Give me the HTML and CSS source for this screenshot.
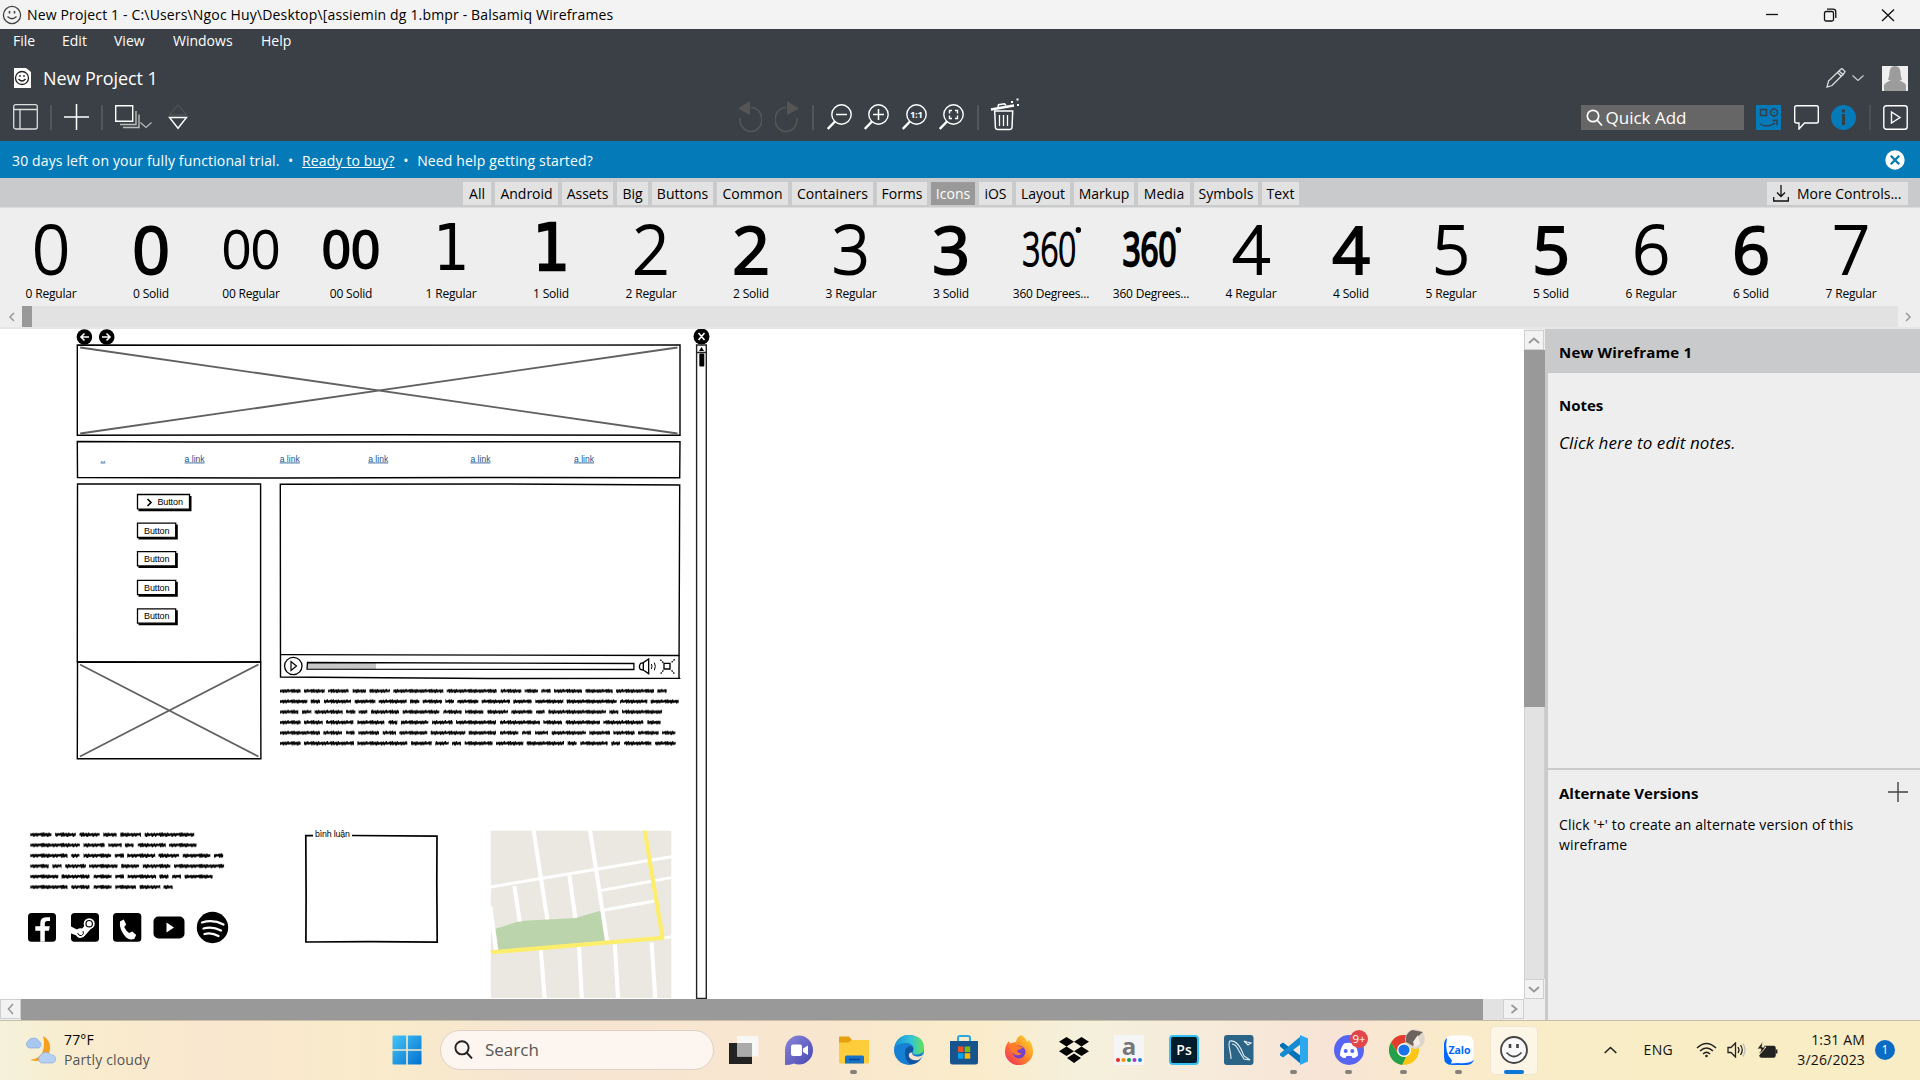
FILE: index.html
```html
<!DOCTYPE html>
<html lang="en">
<head>
<meta charset="utf-8">
<title>New Project 1 - Balsamiq Wireframes</title>
<link rel="stylesheet" href="styles.css">
</head>
<body>
<div class="desktop">
  <header class="titlebar">
    <svg class="title-icon" width="20" height="20" viewBox="0 0 20 20" fill="none" stroke="#444" stroke-width="1.300"><circle cx="10" cy="10" r="8.600"/><path d="M5.500 11.500q4.500 4.500 9 0" /><path d="M7.500 6v2.500M12.500 6v2.500" stroke-width="1.600"/></svg>
    <span class="window-title">New Project 1 - C:\Users\Ngoc Huy\Desktop\[assiemin dg 1.bmpr - Balsamiq Wireframes</span>
    <div class="window-controls">
      <svg width="14" height="14" viewBox="0 0 14 14"><path d="M1 6.500h12" stroke="#111" stroke-width="1.300"/></svg>
      <svg width="14" height="14" viewBox="0 0 14 14" fill="none" stroke="#111" stroke-width="1.300"><rect x="1.500" y="3.500" width="9" height="9.500" rx="1.500"/><path d="M4 1.200h6a2.800 2.800 0 0 1 2.800 2.800v6"/></svg>
      <svg width="14" height="14" viewBox="0 0 14 14"><path d="M1 1.500 13 13M13 1.500 1 13" stroke="#111" stroke-width="1.300"/></svg>
    </div>
  </header>

  <div class="app-head">
    <nav class="menu"><span class="m-file">File</span><span class="m-edit">Edit</span><span class="m-view">View</span><span class="m-windows">Windows</span><span>Help</span></nav>
    <div class="project-row">
      <svg width="18" height="20" viewBox="0 0 18 20"><path d="M1 0h12l5 4v16H1z" fill="#fff"/><g fill="none" stroke="#222" stroke-width="1.300"><circle cx="9" cy="10" r="6.500"/><path d="M5.500 11q3.500 4 7 0M7 7v2M11 7v2"/></g></svg>
      <span class="project-name">New Project 1</span>
      <div class="account">
        <svg width="20" height="20" viewBox="0 0 20 20" fill="none" stroke="#ddd" stroke-width="1.300"><path d="m1 19 1.500-6L14 2l2-1.500 3 3L17.500 6 6 17.500z"/><path d="m13 3 4.500 4M11.500 4.500l4 4"/></svg>
        <svg class="chev" width="12" height="6" viewBox="0 0 12 6" fill="none" stroke="#ccc" stroke-width="1.200"><path d="m.5.500 5.500 5 5.500-5"/></svg>
        <svg width="26" height="25" viewBox="0 0 26 25"><path d="M0 0h26v25H0z" fill="#efefef"/><path d="M2 25v-6q1-2.500 7-4.500-2.500 0-3-1 1.500-3 1.500-7.500Q8 0 13 0t5.500 6q0 4.500 1.500 7.500-.5 1-3 1 6 2 7 4.500v6z" fill="#9c9c9c"/></svg>
      </div>
    </div>
    <div class="toolbar">
      <div class="tools tools-left">
        <svg width="25" height="26" viewBox="0 0 25 26" fill="none" stroke="#ddd" stroke-width="1.300"><rect x=".7" y=".7" width="23.600" height="24.300" rx="2"/><path d="M1 5.500h23M7 5.500V25"/></svg>
        <i class="sep"></i>
        <svg width="25" height="26" viewBox="0 0 25 26" stroke="#fff" stroke-width="1.500"><path d="M12.500 0v26M0 13h25"/></svg>
        <i class="sep"></i>
        <svg width="37" height="26" viewBox="0 0 37 26" fill="none" stroke="#fff" stroke-width="1.400"><path d="M.7 1.700h17v15.500H.7z"/><path d="M21 7v13.500H5M24 10.500v13H8" stroke="#bbb"/><path d="m25.500 18.500 5.500 5 5.500-5" stroke="#bbb" stroke-width="1.100"/></svg>
        <svg class="order" width="20" height="26" viewBox="0 0 20 26" fill="none"><path d="M1.500 11 10 .8 18.500 11z" stroke="#59595b"/><path d="M1.500 13.500h17L10 24.300z" stroke="#fff" stroke-width="1.400"/></svg>
      </div>
      <div class="tools tools-center">
        <svg width="25" height="32" viewBox="0 0 25 32"><path d="M14 6.500A11 12 0 1 1 3 17" fill="none" stroke="#555554" stroke-width="1.700"/><path d="M13 0v14L1 7.500z" fill="#555554"/></svg>
        <svg width="25" height="32" viewBox="0 0 25 32"><path d="M11 6.500A11 12 0 1 0 22 17" fill="none" stroke="#555554" stroke-width="1.700"/><path d="M12 0v14l12-6.500z" fill="#555554"/></svg>
        <i class="sep"></i>
        <svg width="25" height="26" viewBox="0 0 25 26" fill="none" stroke="#fff"><circle cx="14.500" cy="10.500" r="9.700" stroke-width="1.400"/><path d="M8 17.500.8 25" stroke-width="2.400"/><path d="M9 10.500h11" stroke-width="1.500"/></svg>
        <svg width="25" height="26" viewBox="0 0 25 26" fill="none" stroke="#fff"><circle cx="14.500" cy="10.500" r="9.700" stroke-width="1.400"/><path d="M8 17.500.8 25" stroke-width="2.400"/><path d="M9 10.500h11M14.500 5v11" stroke-width="1.500"/></svg>
        <svg width="25" height="26" viewBox="0 0 25 26" fill="none" stroke="#fff"><circle cx="14.500" cy="10.500" r="9.700" stroke-width="1.400"/><path d="M8 17.500.8 25" stroke-width="2.400"/><text class="ratio" x="14.300" y="14.300" text-anchor="middle">1:1</text></svg>
        <svg width="25" height="26" viewBox="0 0 25 26" fill="none" stroke="#fff"><circle cx="14.500" cy="10.500" r="9.700" stroke-width="1.400"/><path d="M8 17.500.8 25" stroke-width="2.400"/><path d="M13 6.500h-2.500v3M16 6.500h2.500v3M13 14.500h-2.500v-3M16 14.500h2.500v-3" stroke-width="1.400"/></svg>
        <i class="sep"></i>
        <svg class="trash" width="30" height="33" viewBox="0 0 30 33" fill="none" stroke="#fff"><path d="M1 11.500 24 7.500" stroke-width="2.600"/><path d="m8 9 .5-2.300 6-1L16 7.500" stroke-width="1.500"/><path d="M4.700 13h18l-.7 16.500q-.3 2-2.300 2h-12q-2 0-2.300-2z" stroke-width="1.500"/><path d="M9.500 17v11M13.500 17v11M17.500 17v11" stroke-width="1.300"/><path d="M21 4h2M26.500 1.500h2M27 7h2" stroke-width="2"/></svg>
      </div>
      <div class="tools tools-right">
        <div class="quick-add"><svg width="17" height="17" viewBox="0 0 17 17" fill="none" stroke="#fff" stroke-width="1.700"><circle cx="7" cy="7" r="5.700"/><path d="m11 11 5 5.500"/></svg><span>Quick Add</span></div>
        <svg width="25" height="25" viewBox="0 0 25 25"><path d="M0 0h25v25H0z" fill="#057ab9"/><g fill="none" stroke="#333e48" stroke-width="1.400"><path d="M4.500 4.500h6v6h-6zM4 19q7 4.500 15-1M16.500 15.500l4.500-.3v5"/><circle cx="18" cy="7.500" r="3.500"/><path d="M17.300 7.500h1.400"/></g></svg>
        <svg width="25" height="25" viewBox="0 0 25 25" fill="none" stroke="#fff" stroke-width="1.400"><path d="M2.500.800h20q1.800 0 1.800 1.800v13.600q0 1.800-1.800 1.800H10.500L5 24v-6H2.500Q.7 18 .7 16.200V2.600Q.7.800 2.500.800z"/></svg>
        <svg width="25" height="25" viewBox="0 0 25 25"><circle cx="12.500" cy="12.500" r="12.500" fill="#057ab9"/><path d="M12.500 9v11M12.500 4.500v3" stroke="#353f46" stroke-width="3"/></svg>
        <i class="sep sep-thin"></i>
        <svg width="25" height="25" viewBox="0 0 25 25" fill="none" stroke="#fff" stroke-width="1.400"><rect x=".8" y=".8" width="23.400" height="23.400" rx="2.500"/><path d="M8.500 7v11l8.500-5.500z"/></svg>
      </div>
    </div>
  </div>

  <div class="trial">
    <span>30 days left on your fully functional trial.</span><span class="dot">•</span><a>Ready to buy?</a><span class="dot">•</span><span>Need help getting started?</span>
    <svg class="trial-close" width="20" height="20" viewBox="0 0 20 20"><circle cx="10" cy="10" r="9.700" fill="#fff"/><path d="m5.800 5.800 8.400 8.400m0-8.400-8.400 8.400" stroke="#057ab9" stroke-width="2.300"/></svg>
  </div>

  <div class="categories">
    <div class="tabs">
      <span>All</span><span>Android</span><span>Assets</span><span>Big</span><span>Buttons</span><span>Common</span><span>Containers</span><span>Forms</span><span class="active">Icons</span><span>iOS</span><span>Layout</span><span>Markup</span><span>Media</span><span>Symbols</span><span>Text</span>
    </div>
    <div class="more"><svg width="16" height="17" viewBox="0 0 16 17" fill="none" stroke="#111" stroke-width="1.300"><path d="M8 0v11.500M4 7.500l4 4 4-4M.7 12v4h14.600v-4"/></svg><span>More Controls...</span></div>
  </div>

  <div class="library">
    <div class="cell"><b class="num light">0</b><span>0 Regular</span></div>
    <div class="cell"><b class="num heavy">0</b><span>0 Solid</span></div>
    <div class="cell"><b class="num light mid">00</b><span>00 Regular</span></div>
    <div class="cell"><b class="num heavy mid">00</b><span>00 Solid</span></div>
    <div class="cell"><b class="num one">1</b><span>1 Regular</span></div>
    <div class="cell"><b class="num one one-solid">1</b><span>1 Solid</span></div>
    <div class="cell"><b class="num light">2</b><span>2 Regular</span></div>
    <div class="cell"><b class="num heavy">2</b><span>2 Solid</span></div>
    <div class="cell"><b class="num light">3</b><span>3 Regular</span></div>
    <div class="cell"><b class="num heavy">3</b><span>3 Solid</span></div>
    <div class="cell"><b class="num light small">360<i class="degree"></i></b><span>360 Degrees...</span></div>
    <div class="cell"><b class="num heavy small">360<i class="degree"></i></b><span>360 Degrees...</span></div>
    <div class="cell"><b class="num light">4</b><span>4 Regular</span></div>
    <div class="cell"><b class="num heavy">4</b><span>4 Solid</span></div>
    <div class="cell"><b class="num light">5</b><span>5 Regular</span></div>
    <div class="cell"><b class="num heavy">5</b><span>5 Solid</span></div>
    <div class="cell"><b class="num light">6</b><span>6 Regular</span></div>
    <div class="cell"><b class="num heavy">6</b><span>6 Solid</span></div>
    <div class="cell"><b class="num light">7</b><span>7 Regular</span></div>
  </div>
  <div class="library-scroll">
    <svg width="22" height="21" viewBox="0 0 22 21" fill="none" stroke="#999" stroke-width="1.500"><path d="m14 7-4 4 4 4"/></svg>
    <i class="lib-thumb"></i><i class="lib-track"></i>
    <svg width="22" height="21" viewBox="0 0 22 21" fill="none" stroke="#999" stroke-width="1.500"><path d="m8 7 4 4-4 4"/></svg>
  </div>

  <main class="workspace">
    <div class="editor">
      <svg class="canvas" width="1524" height="670" viewBox="0 329 1524 670" fill="none" stroke="#000">
        <defs>
          <pattern id="scribble" patternUnits="userSpaceOnUse" width="59" height="31.400" y="137.300"><path d="M0 15.500h59" stroke="#000" stroke-width="5.500"/><path d="M0 17l6-5 2 7 5-8 2 8 6-6 3 8 4-9 3 6 7-5 2 7 5-7 3 6 6-8 3 8" stroke="#000" stroke-width="4.500"/></pattern>
          <pattern id="scribble2" patternUnits="userSpaceOnUse" width="43" height="31.400" y="58.300"><path d="M0 15.500h43" stroke="#000" stroke-width="5.500"/><path d="M0 17l4-5 2 7 3-8 2 8 4-6 3 8 3-9 3 6 5-5 2 7 4-7 3 6 4-8" stroke="#000" stroke-width="4"/></pattern>
        </defs>
        <g stroke="none" fill="#000"><circle cx="84.400" cy="337" r="7.800"/><circle cx="106.700" cy="337" r="7.800"/><circle cx="701.500" cy="336.500" r="8"/></g>
        <path d="M89 337h-8m3.500-3.500L81 337l3.500 3.500M102 337h8m-3.500-3.500 3.500 3.500-3.500 3.500M698.500 333l6 7m0-7-6 7" stroke="#fff" stroke-width="1.600"/>
        <path d="M77.300 345 300 345.300 680 345v90.300L400 434.800 77.300 435.300z" stroke-width="1.400"/>
        <path d="m80.200 347.500 597.300 86M677.500 347.500l-597.300 86" stroke="#606060" stroke-width="1.800"/>
        <path d="M77.300 441.500 200 442l480-.4-.3 36.200-200-.3-200 .5L77.500 477.500z" stroke-width="1.400"/>
        <g class="wf-link"><text x="100.600" y="461.500">..</text><text x="184.600" y="461.500" textLength="20">a link</text><text x="279.700" y="461.500" textLength="20">a link</text><text x="368.200" y="461.500" textLength="20">a link</text><text x="470.400" y="461.500" textLength="20">a link</text><text x="574" y="461.500" textLength="20">a link</text></g>
        <path d="M77.500 483.900 260.600 484v178L77.300 661.700z" stroke-width="1.400"/>
        <path d="M77.500 662 200 662.300 260.700 662l.2 96.700-183.600.1z" stroke-width="1.400"/>
        <path d="m80 664.500 178.500 92M258.500 664.500l-178.500 92" stroke="#606060" stroke-width="1.700"/>
        <path d="M280.300 484.200 500 484l179.700 1-.7 192.500.5.800-190 .2L280.500 677z" stroke-width="1.400"/>
        <path d="M280.500 654.700 679.500 655.500" stroke-width="1.300"/>
        <g stroke="none" fill="#000"><path d="M189 496h2.500v15.300h-53V509H189z"/><path d="M175.500 524.500h2.300v15H138.500v-2.300h37zM175.500 553h2.300v15H138.500v-2.300h37zM175.500 581.700h2.300v15H138.500v-2.300h37zM175.500 610.300h2.300v15H138.500v-2.300h37z"/></g>
        <g stroke-width="1.300" fill="#fff"><path d="M137.500 494.500h52v14.700l-52-.3zM137.500 523.200h38.200v14l-38.200.3zM137.500 551.600h38.200v14l-38.200.3zM137.500 580.300h38.200v14l-38.200.3zM137.500 608.900h38.200v14l-38.200.3z"/></g>
        <path d="m147.500 499 3.500 3.500-3.500 3.500" stroke-width="1.600"/>
        <g class="wf-button"><text x="157.400" y="505" textLength="25.500">Button</text><text x="144" y="533.700" textLength="25.500">Button</text><text x="144" y="562" textLength="25.500">Button</text><text x="144" y="590.800" textLength="25.500">Button</text><text x="144" y="619" textLength="25.500">Button</text></g>
        <path d="M696.600 345h9.700v653.500h-9.700zM696.600 352.500h9.700" stroke-width="1.400" stroke="#222"/>
        <path d="M699 351h5l-2.500-4z" fill="#000" stroke="none"/><rect x="699.300" y="353.500" width="5" height="13" rx="1" fill="#000" stroke="none"/>
        <circle cx="293.300" cy="666" r="8.700" stroke-width="1.300"/><path d="M291 661.500v9l5.500-4.500z" stroke-width="1.200"/>
        <path d="M307.500 662.500H376v7H307.500z" fill="#c8c8c8" stroke="none"/><path d="M307.500 662.500 633.900 663.500v6L307 669.200z" stroke-width="1.300"/>
        <g transform="translate(270 640) scale(.33333)" stroke-width="4"><path d="m1112 70 8-2 16-11v44l-16-11-9-2q-6-9 1-18zM1120 68v22"/><path d="M1144 72q4 7 0 15M1153 68q6 11 0 23" stroke-width="3"/><path d="M1182 70h18v17h-18z"/><path d="m1171 59 9 9m34-10-10 10m-32 33 9-11m32 11-9-11" stroke-dasharray="5 3"/></g>
        <g transform="translate(270 640) scale(.33333)" stroke="url(#scribble)" stroke-width="14">
          <path d="M30 153h62m10 0h62m10 0h62m12 0h40m10 0h62m10 0h150m10 0h150m12 0h62m10 0h40m10 0h28m10 0h84m10 0h82m10 0h114m10 0h28"/>
          <path d="M30 184.400h82m10 0h28m12 0h81m11 0h62m10 0h84m10 0h28m10 0h58m10 0h26m10 0h63m10 0h85m10 0h55m11 0h84m10 0h150m10 0h82m10 0h84"/>
          <path d="M30 215.800h55m11 0h28m10 0h84m10 0h28m10 0h26m11 0h84m11 0h110m12 0h55m10 0h55m12 0h62m10 0h63m11 0h26m11 0h173m10 0h27m11 0h120"/>
          <path d="M30 247.200h62m10 0h56m10 0h82m12 0h81m12 0h27m11 0h82m11 0h62m10 0h120m12 0h120m10 0h56m11 0h103m10 0h120m12 0h40"/>
          <path d="M30 278.600h120m10 0h56m12 0h26m11 0h62m11 0h40m10 0h84m10 0h104m10 0h82m12 0h55m11 0h27m12 0h39m11 0h103m10 0h62m10 0h64m10 0h62m10 0h40"/>
          <path d="M30 310h62m10 0h150m10 0h150m11 0h62m11 0h40m10 0h27m11 0h84m10 0h82m10 0h112m11 0h27m11 0h82m11 0h26m12 0h82m11 0h62"/>
        </g>
        <g transform="translate(0 810) scale(.45918 .33333)" stroke="url(#scribble2)" stroke-width="14">
          <path d="M66 74h46m8 0h45m8 0h44m8 0h29m8 0h45m8 0h108"/>
          <path d="M66 105.400h108m8 0h46m8 0h29m7 0h19m9 0h61m7 0h60"/>
          <path d="M66 136.800h81m8 0h18m9 0h60m8 0h20m7 0h61m7 0h45m8 0h60m8 0h20"/>
          <path d="M66 168.200h40m8 0h20m8 0h45m7 0h62m8 0h39m8 0h60m8 0h109"/>
          <path d="M66 199.600h61m7 0h61m9 0h39m8 0h19m8 0h62m7 0h20m8 0h19m8 0h61"/>
          <path d="M66 231h81m8 0h40m9 0h39m8 0h45m8 0h45m7 0h20"/>
        </g>
        <g stroke="none" fill="#000">
          <rect x="28" y="913" width="28" height="28.700" rx="3.500"/><rect x="71" y="913" width="28" height="28.700" rx="3.500"/><rect x="113" y="913" width="28.300" height="28.700" rx="3.500"/><rect x="153.500" y="916.500" width="31" height="22" rx="5"/><circle cx="212.500" cy="927.500" r="15.700"/>
        </g>
        <path d="M40.300 941.700v-11h-5v-4.500h5v-3q0-6 5.700-6h4v3.800h-2.700q-2.500 0-2.500 2.700v2.500h5l-.8 4.500h-4.200v11z" fill="#fff" stroke="none"/>
        <path d="m70 926 10 5 6.500-7.500 6 3.500-8 9-5 2-3-2.500-6.500-2.500z" fill="#fff" stroke="none"/><circle cx="89.200" cy="923.700" r="5.500" fill="#fff" stroke="none"/><circle cx="89.200" cy="923.700" r="3.200" stroke-width="1.200"/><circle cx="80.500" cy="933" r="4.800" fill="#fff" stroke="none"/><path d="M77.500 933q1 3 4 2.700 3-1.500 1.500-4.500" stroke-width="1"/>
        <path d="m120 921.500 3.700-2 2.500 5-2 2.500q1.800 4 5 6l3-1.500 4 3.500-2 4q-6 2-10.500-4.500-4.500-6-3.700-13z" fill="#fff" stroke="none"/>
        <path d="M166.500 922.500v10l7.500-5z" fill="#fff" stroke="none"/>
        <path d="M202 922.500q11-3.500 21.500 2M203.500 928.500q9-2.500 17.500 2M204.500 934q7-2 14 2" stroke="#fff" stroke-width="2.300" stroke-linecap="round"/>
        <path d="M313 835.700h-7.200l.3 60-.2 46.300 65-.3 66.300.5-.4-60 .2-46-85-.7" stroke-width="1.700"/>
        <text class="wf-group" x="315" y="837" textLength="35">bình luận</text>
        <g transform="translate(0 810) scale(.45918 .33333)">
          <path d="M1069 62h393v502h-393z" fill="#ebe8e1" stroke="none"/>
          <path d="M1079 356l54-23 120-9 55-22 10 90-232 30z" fill="#bbd4ab" stroke="none"/>
          <g stroke="#fff" stroke-width="9"><path d="M1068 231 1462 140M1162 62l30 266M1285 62l37 330M1120 228l12 107M1240 197l13 127M1310 241l152-38M1316 300l110-27M1068 290l12 130M1178 420l8 144M1261 410l6 154M1339 403l7 161M1419 397l8 167M1440 384l22-3"/></g>
          <path d="M1404 62l39 322" stroke="#fcee6b" stroke-width="9"/><path d="M1069 427 1446 383" stroke="#fcee6b" stroke-width="12"/>
        </g>
      </svg>
      <div class="v-scroll">
        <div class="sc-btn"><svg width="12" height="7" viewBox="0 0 12 7" fill="none" stroke="#999" stroke-width="2"><path d="m1 6 5-4.500L11 6"/></svg></div>
        <i class="v-thumb"></i><i class="v-track"></i>
        <div class="sc-btn"><svg width="12" height="7" viewBox="0 0 12 7" fill="none" stroke="#999" stroke-width="2"><path d="m1 1 5 4.500L11 1"/></svg></div>
      </div>
      <div class="h-scroll">
        <div class="sc-btn"><svg width="7" height="12" viewBox="0 0 7 12" fill="none" stroke="#999" stroke-width="1.600"><path d="M6 1 1.500 6 6 11"/></svg></div>
        <i class="h-thumb"></i><i class="h-track"></i>
        <div class="sc-btn"><svg width="8" height="10" viewBox="0 0 8 10" fill="none" stroke="#999" stroke-width="1.800"><path d="m1.500 1 5 4-5 4"/></svg></div>
      </div>
    </div>
    <aside class="inspector">
      <h1 class="wf-name"><span>New Wireframe 1</span></h1>
      <section class="notes"><h2>Notes</h2><p>Click here to edit notes.</p></section>
      <section class="alternates">
        <div class="alt-head"><h2>Alternate Versions</h2><svg width="20" height="20" viewBox="0 0 20 20" stroke="#444" stroke-width="1.400"><path d="M10 0v20M0 10h20"/></svg></div>
        <p>Click '+' to create an alternate version of this<br>wireframe</p>
      </section>
    </aside>
  </main>

  <footer class="taskbar">
    <div class="weather">
      <svg width="32" height="32" viewBox="0 0 32 32"><path d="M19 2q10 6 6 17-5 11-19 7 11-2 13-9 2-8 0-15z" fill="#f6a020"/><path d="M5 14a4 4 0 0 1-1-7 6 5 0 0 1 11 0 4 4 0 0 1 0 7z" fill="#a9c6ef" stroke="#7fa6df" stroke-width=".6"/><path d="M17 29a4.500 4.500 0 0 1 0-8 6 6 0 0 1 10 0 4 4 0 0 1 1 8z" fill="#b6d0f4" stroke="#7fa6df" stroke-width=".6"/></svg>
      <div class="weather-text"><span class="temp">77°F</span><span class="sky">Partly cloudy</span></div>
    </div>
    <svg class="start" width="30" height="30" viewBox="0 0 30 30"><defs><linearGradient id="win" x1="0" y1="0" x2="1" y2="1"><stop stop-color="#45c5f7"/><stop offset="1" stop-color="#0270cf"/></linearGradient></defs><path d="M.5 1.500Q.5.500 1.500.500h12.700v13.700H.5zM15.800.500h12.700q1 0 1 1v12.700H15.800zM.5 15.800h13.700v13.700H1.500q-1 0-1-1zM15.800 15.800h13.700v12.700q0 1-1 1H15.800z" fill="url(#win)"/></svg>
    <div class="search"><svg width="19" height="19" viewBox="0 0 19 19" fill="none" stroke="#222" stroke-width="1.900"><circle cx="8" cy="7.800" r="6.600"/><path d="m12.500 12.500 5.500 6"/></svg><span>Search</span></div>
    <div class="apps">
      <div class="app"><svg width="30" height="30" viewBox="0 0 30 30"><path d="M0 8h23v21H0z" fill="#222"/><path d="M8 1h21.500v20.500H8z" fill="#f7f7f5"/><path d="M8 8h15v13.500H8z" fill="#aaa"/></svg></div>
      <div class="app"><svg width="30" height="30" viewBox="0 0 30 30"><defs><linearGradient id="chat" x2="1" y2="1"><stop stop-color="#8b87dc"/><stop offset="1" stop-color="#4646b0"/></linearGradient></defs><path d="M1 30V15A14 14.500 0 1 1 15 29.500q-3 0-5-1-4 1.500-9 1.500z" fill="url(#chat)"/><rect x="7" y="9.500" width="11" height="11.500" rx="2" fill="#fff"/><path d="m19 13.500 5-3v9.500l-5-3z" fill="#fff"/></svg></div>
      <div class="app"><svg width="30" height="30" viewBox="0 0 30 30"><path d="M0 2.500Q0 1.500 1 1.500h9l3 3.500H29q1 0 1 1V13H0z" fill="#e4a10c"/><path d="M0 7.500h9.500L13 5h17v22q0 1.500-1.500 1.500h-27Q0 28.500 0 27z" fill="#fdcd3c"/><path d="M6 22q0-1.500 1.500-1.500h16Q25 20.500 25 22v6.500H6z" fill="#1672c8"/><path d="M10 24.500h11" stroke="#0a4791" stroke-width="1.500"/></svg><i class="running"></i></div>
      <div class="app"><svg width="30" height="30" viewBox="0 0 30 30"><defs><linearGradient id="edge" x1="0" x2="1"><stop stop-color="#1592da"/><stop offset=".55" stop-color="#32c2d8"/><stop offset="1" stop-color="#66e356"/></linearGradient></defs><circle cx="15" cy="15" r="15" fill="#1680d4"/><path d="M.5 12Q3 0 15.500 0 30 1 30 13q0 6-7 6.500-4 0-4.500-2 1.500-2 1-5Q18 8 12 8 5 8 .5 12z" fill="url(#edge)"/><path d="M11 16q1-4.500 6-5 4 1.500 1 6.500.5 3.500 5 3.500 5 0 5-2.500Q29 22 25 26q-4 4-9 3-6-4-5-13z" fill="#10559f"/><path d="M18 17.500q0 4 6 4 4 0 5.500-3l-1 3.500-4 3q-8 1-9.500-3.500-1-4 3-4z" fill="#f5e4cf"/></svg></div>
      <div class="app"><svg width="30" height="30" viewBox="0 0 30 30"><path d="M9 7V3q0-2 2-2h8q2 0 2 2v4" fill="none" stroke="#28a8e6" stroke-width="2"/><path d="M1 6h28v21q0 2.500-2.500 2.500h-23Q1 29.500 1 27z" fill="#17548d"/><path d="M9 11.500h5.500V17H9z" fill="#f05125"/><path d="M15.700 11.500h5.500V17h-5.500z" fill="#80bb09"/><path d="M9 18.200h5.500v5.500H9z" fill="#04a4ed"/><path d="M15.700 18.200h5.500v5.500h-5.500z" fill="#ffb802"/></svg></div>
      <div class="app"><svg width="30" height="30" viewBox="0 0 30 30"><defs><linearGradient id="fox" x1="1" y1="0" x2="0" y2="1"><stop stop-color="#ffe635"/><stop offset=".5" stop-color="#ff8526"/><stop offset="1" stop-color="#f0226c"/></linearGradient></defs><path d="M17 0q5 3 6 7l2-2q4 5 4 11.500A14 13.500 0 0 1 1 17Q1 10 5 6l1 3q3-2 6-2 0-4 5-7z" fill="url(#fox)"/><circle cx="15" cy="17" r="6.500" fill="#7541cc"/><path d="M5 9q6-2 9 2l5 1q-2 3-6 3 1 4 5 3-3 4-8 1-4-4-5-10z" fill="#ff7b2a"/></svg></div>
      <div class="app"><svg width="30" height="30" viewBox="0 0 30 30"><path d="m7.500 2 7.500 4.700-7.500 4.800L0 6.700zM22.500 2 30 6.700l-7.500 4.800L15 6.700zM7.500 11.500l7.500 4.800L7.500 21 0 16.300zM22.500 11.500l7.500 4.800-7.500 4.700-7.500-4.700zM15 18.500l7 4.500-7 5-7-5z" fill="#050505"/></svg></div>
      <div class="app"><svg width="30" height="30" viewBox="0 0 30 30"><path d="M0 0h30v30H0z" fill="#f5f5f5"/><text class="logo-a" x="15" y="19.500" text-anchor="middle">a</text><g><circle cx="4" cy="25" r="2" fill="#e22"/><circle cx="9.500" cy="25" r="2" fill="#f80"/><circle cx="15" cy="25" r="2" fill="#1a9e48"/><circle cx="20.500" cy="25" r="2" fill="#a038d0"/><circle cx="26" cy="25" r="2" fill="#1686e0"/></g></svg></div>
      <div class="app"><svg width="30" height="30" viewBox="0 0 30 30"><rect x="1" y="1" width="28" height="28" rx="3" fill="#001d2b" stroke="#34c0f0" stroke-width="2"/><text class="logo-ps" x="15" y="20" text-anchor="middle">Ps</text></svg></div>
      <div class="app"><svg width="30" height="30" viewBox="0 0 30 30"><rect width="29.500" height="30" rx="3" fill="#2c6488"/><path d="M7 24q0-4-1-8Q4 8 6 6q6-1 11 8l3 7 6 4-6-1-5-8q-3-7-7-7M20 6l3 1 4 1-3 2z" fill="none" stroke="#e5edf2" stroke-width="1.100"/></svg></div>
      <div class="app"><svg width="30" height="30" viewBox="0 0 30 30"><path d="m1 9.500 3-2L22 21v8L1 11.500z" fill="#0072b9"/><path d="m1 20.500 3 2L22 9V1L1 18.500z" fill="#168bd2"/><path d="m21 0 8 3.500v23L21 30z" fill="#2ca9ee"/></svg><i class="running"></i></div>
      <div class="app"><svg width="30" height="30" viewBox="0 0 30 30"><circle cx="15" cy="15" r="15" fill="#5865f2"/><path d="M10 8.500q5-1.500 10 0 4 5 4 12-3 3-5.500 2.500l-1-2h-5l-1 2Q8.500 23.500 6 20.500q0-7 4-12z" fill="#fff"/><circle cx="11.700" cy="16" r="2" fill="#5865f2"/><circle cx="18.300" cy="16" r="2" fill="#5865f2"/></svg><span class="badge">9+</span><i class="running"></i></div>
      <div class="app"><svg width="30" height="30" viewBox="0 0 30 30"><circle cx="15" cy="15" r="15" fill="#fbc617"/><path d="M2 7.500A15 15 0 0 1 28 7.500H15L9 18z" fill="#e33b2e"/><path d="M2 7.500 10 20l7 2-4 8A15 15 0 0 1 2 7.500z" fill="#22a04b"/><circle cx="15" cy="15" r="7" fill="#fff"/><circle cx="15" cy="15" r="5.600" fill="#1a73e8"/></svg><svg class="avatar-badge" width="20" height="20" viewBox="0 0 20 20"><circle cx="10" cy="10" r="10" fill="#ded5cb"/><path d="M1 13Q0 4 7 1l11 2-7 6-3 8z" fill="#6d625c"/><path d="m8 13 5-7 2 9-5 3z" fill="#f6eee6"/></svg><i class="running"></i></div>
      <div class="app"><svg width="30" height="30" viewBox="0 0 30 30"><rect x=".5" y=".5" width="29" height="29" rx="7" fill="#fff"/><path d="M3 3Q0 5 0 10v12q0 8 8 8h14q6 0 8-5-6 4-16 3l-7 .5 1-3Q0 18 3 3z" fill="#0068ff"/><text class="logo-zalo" x="15.500" y="18.500" text-anchor="middle">Zalo</text></svg><i class="running"></i></div>
      <div class="app current"><svg width="30" height="30" viewBox="0 0 30 30" fill="#f9f9f9" stroke="#444" stroke-width="1.800"><circle cx="15" cy="15" r="13"/><path d="M7.500 17.500q7.500 8 15 0" fill="none"/><path d="M11 9v4M18.500 9v4" stroke-width="2.600"/></svg><i class="running focus"></i></div>
    </div>
    <div class="tray">
      <svg class="t-up" width="13" height="8" viewBox="0 0 13 8" fill="none" stroke="#222" stroke-width="1.600"><path d="m.7 7 5.800-5.500L12.300 7"/></svg>
      <span class="lang">ENG</span>
      <svg class="t-wifi" width="21" height="16" viewBox="0 0 21 16" fill="none" stroke="#222" stroke-width="1.500"><path d="M1 6q9.500-9 19 0M4 9q6.500-6 13 0M7 12q3.500-3.500 7 0"/><circle cx="10.500" cy="14" r="1.300" fill="#222" stroke="none"/></svg>
      <svg class="t-vol" width="19" height="16" viewBox="0 0 19 16" fill="none" stroke="#222" stroke-width="1.300"><path d="M1 5.500h3L8.500 1v14L4 10.500H1z"/><path d="M11 5q2 3 0 6M13.500 3q3.500 5 0 10"/><path d="M16 1.500q4 6.500 0 13" stroke="#bbb"/></svg>
      <svg class="t-bat" width="21" height="18" viewBox="0 0 21 18"><path d="M7 5.500h9.500q1.500 0 1.500 1.500v7.500q0 1.500-1.500 1.500h-12Q3 16 3 14.500V11" fill="#222" stroke="#222" stroke-width="1.500"/><path d="M19.500 8.500v4" stroke="#222" stroke-width="1.800"/><path d="M6 0 0 8h4l-2 6 7-8H5z" fill="#222" stroke="#f8ecc3" stroke-width=".9"/></svg>
      <div class="clock"><span>1:31 AM</span><span class="date">3/26/2023</span></div>
      <span class="notif">1</span>
    </div>
  </footer>
</div>
</body>
</html>
```
FILE: styles.css
```css
* { box-sizing: border-box; }
body { margin: 0; font-family: "Open Sans", "Noto Sans", sans-serif; color: #000; overflow: hidden; }
h1, h2, p { margin: 0; }
svg { display: block; flex: none; }
.desktop { width: 1920px; height: 1080px; display: flex; flex-direction: column; background: #fff; white-space: nowrap; }

.titlebar { height: 29px; background: #f3f3f3; display: flex; align-items: center; padding-left: 2px; }
.window-title { margin-left: 5px; font-size: 14px; letter-spacing: .16px; }
.window-controls { margin-left: auto; display: flex; gap: 44px; padding-right: 25px; }

.app-head { height: 112px; background: #3a4046; color: #fff; }
.menu { display: flex; height: 22px; padding-left: 13px; align-items: center; font-size: 14px; }
.m-file { width: 49px; }
.m-edit { width: 52px; }
.m-view { width: 59px; }
.m-windows { width: 88px; }
.project-row { display: flex; align-items: center; height: 50px; padding: 4px 12px 0 13px; }
.project-name { margin-left: 12px; font-size: 18px; letter-spacing: -.1px; }
.account { margin-left: auto; display: flex; align-items: center; }
.chev { margin: 0 18px 0 6px; }
.toolbar { display: grid; grid-template-columns: 737px 1fr auto; height: 28px; align-items: center; }
.tools { display: flex; align-items: center; }
.tools-left { gap: 12px; padding-left: 13px; }
.order { margin-left: 4px; }
.tools-center { gap: 12.5px; }
.tools-right { gap: 12.5px; padding-right: 12px; }
.sep { width: 2px; height: 25px; background: #53565a; }
.sep-thin { width: 2px; background: #4b5054; }
.trash { margin: -6px 0 0 -1px; }
.ratio { font: 700 9.500px "Open Sans", sans-serif; fill: #fff; stroke: none; letter-spacing: -.3px; }
.quick-add { width: 163px; height: 25px; background: #666; display: flex; align-items: center; padding-left: 5px; gap: 3px; font-size: 17px; }

.trial { height: 37px; background: #057ab9; color: #fff; display: flex; align-items: center; padding: 0 15px 0 12px; font-size: 14px; letter-spacing: .14px; }
.trial span, .trial a { padding-top: 1px; }
.trial a { text-decoration: underline; }
.dot { width: 22.500px; text-align: center; }
.trial-close { margin-left: auto; }

.categories { height: 30px; background: #c9cacc; border-bottom: 1px solid #dcdcdc; display: flex; align-items: center; padding: 2px 12px 0 463px; font-size: 14px; }
.tabs { display: grid; gap: 4px; grid-template-columns: 28px 63px 51px 31px 61px 71px 81px 50px 44px 33px 54px 60px 52px 64px 37px; }
.tabs span { height: 23px; line-height: 23px; text-align: center; background: #e2e2e2; }
.tabs .active { background: #999; color: #fff; }
.more { margin-left: auto; width: 141px; height: 23px; background: #e2e2e2; display: flex; align-items: center; padding-left: 6px; gap: 8px; }

.library { height: 98px; background: #eee; display: grid; grid-template-columns: repeat(19, 100px); padding-left: 1px; }
.cell { display: flex; flex-direction: column; align-items: center; font-size: 12px; letter-spacing: -.2px; line-height: 16px; }
.num { height: 70px; line-height: 70px; margin: 5px 0 3px; font-size: 66px; font-weight: 300; letter-spacing: 0; position: relative; display: block; }
.num.light { -webkit-text-stroke: 2px #000; }
.num.heavy { font-weight: 500; -webkit-text-stroke: 2px #000; }
.num.one { font-family: "DejaVu Sans", sans-serif; font-size: 64px; font-weight: 400; transform: scaleX(.9); }
.num.one-solid { -webkit-text-stroke: 2.500px #000; }
.num.mid { font-size: 51px; }
.num.small { font-size: 46px; transform: scaleX(.68); margin-left: -4px; }
.num.small.heavy { -webkit-text-stroke: 2.500px #000; }
.degree { position: absolute; right: -7px; top: 14px; width: 8px; height: 6px; border-radius: 50%; background: #000; }

.library-scroll { height: 23px; background: #eee; display: flex; border-bottom: 2px solid #e6e6e6; }
.lib-thumb { width: 10px; background: #999; }
.lib-track { flex: 1; background: #e2e2e2; }

.workspace { height: 691px; display: flex; }
.editor { width: 1545px; display: grid; grid-template-columns: 1524px 21px; grid-template-rows: 670px 21px; background: #eee; }
.canvas { background: #fff; }
.wf-link { font: 8.500px "Liberation Sans", sans-serif; fill: #17548f; stroke: none; text-decoration: underline; }
.wf-button { font: 9px "Liberation Sans", sans-serif; fill: #000; stroke: none; }
.wf-group { font: 8.800px "Liberation Sans", sans-serif; fill: #000; stroke: none; }
.v-scroll { display: flex; flex-direction: column; align-items: stretch; padding-top: 1px; }
.sc-btn { width: 20px; height: 20px; border: 1px solid #cfcfcf; background: #f2f2f2; display: flex; align-items: center; justify-content: center; }
.v-thumb { height: 357px; background: #999; }
.v-track { flex: 1; background: #e2e2e2; border: 1px solid #cfcfcf; border-width: 0 1px; }
.h-scroll { display: flex; align-items: stretch; width: 1524px; }
.h-scroll .sc-btn { width: 21px; }
.h-thumb { width: 1462px; background: #999; }
.h-track { flex: 1; background: #e2e2e2; }

.inspector { flex: 1; background: #eee; border-left: 3px solid #c9cacc; display: flex; flex-direction: column; }
.wf-name { height: 44px; background: #c9cacc; display: flex; align-items: center; padding: 2px 0 0 11px; font-size: 15px; font-weight: 700; letter-spacing: .2px; }
h2 { font-size: 15px; font-weight: 700; line-height: 20px; }
.notes { height: 397px; border-bottom: 2px solid #c9cacc; padding: 22px 11px; }
.notes p { margin-top: 17px; font-size: 17px; font-style: italic; line-height: 22px; letter-spacing: .1px; }
.alternates { padding: 12px 12px 0 11px; }
.alt-head { display: flex; justify-content: space-between; }
.alternates h2 { padding-top: 1px; line-height: 20px; }
.alternates p { margin-top: 12px; font-size: 14px; line-height: 20px; letter-spacing: .14px; }

.taskbar { height: 60px; border-top: 1px solid #c9bfa9; padding-bottom: 2px; display: flex; align-items: center; background: linear-gradient(90deg, #f4f2db 0, #f9ecce 80px, #f9e7cf 220px, #f9ebca 370px, #f6e5d2 540px, #f8e6cf 800px, #faecca 980px, #f5f0dc 1080px, #f6ecdc 1180px, #f7e4d6 1330px, #faebca 1450px, #f8edc6 1600px, #f8edc4 1920px); }
.weather { display: flex; align-items: center; width: 392px; padding-left: 24px; gap: 8px; }
.weather-text { display: flex; flex-direction: column; font-size: 14px; line-height: 20px; letter-spacing: .15px; }
.sky { color: #555; }
.search { margin-left: 18px; width: 274px; height: 40px; border-radius: 20px; border: 1px solid #dfd2c4; background: #fdf6f0; display: flex; align-items: center; padding-left: 13px; gap: 12px; font-size: 17px; color: #555; }
.apps { display: flex; margin-left: 2px; }
.app { width: 55px; height: 58px; display: flex; align-items: center; justify-content: center; position: relative; }
.current::before { content: ""; position: absolute; inset: 5px 3px 4px 4px; border-radius: 5px; background: #fdf6e6; border: 1px solid #f1e6cf; }
.current svg { position: relative; }
.running { position: absolute; bottom: 5px; left: 24px; width: 7px; height: 4px; border-radius: 2px; background: #858078; }
.running.focus { left: 18px; width: 20px; background: #0a78d4; }
.badge { position: absolute; left: 29px; top: 9px; width: 18px; height: 18px; border-radius: 9px; background: #e2464a; color: #fff; font-size: 11.500px; line-height: 17px; text-align: center; }
.avatar-badge { position: absolute; left: 29px; top: 8px; }
.logo-a { font: 700 24px "Open Sans", sans-serif; fill: #777; }
.logo-ps { font: 600 14px "Open Sans", sans-serif; fill: #fff; }
.logo-zalo { font: 700 10.500px "Open Sans", sans-serif; fill: #0068ff; }
.tray { margin-left: auto; display: flex; align-items: center; padding-right: 25px; color: #111; font-size: 14px; }
.lang { margin: 0 23px 0 27px; letter-spacing: .3px; }
.t-vol { margin: 0 11px 0 10px; }
.clock { display: flex; flex-direction: column; align-items: flex-end; line-height: 20px; letter-spacing: .15px; width: 87px; margin-right: 10px; }
.notif { width: 20px; height: 20px; border-radius: 10px; background: #0a6cc4; color: #fff; font-size: 12px; line-height: 20px; text-align: center; }
```
